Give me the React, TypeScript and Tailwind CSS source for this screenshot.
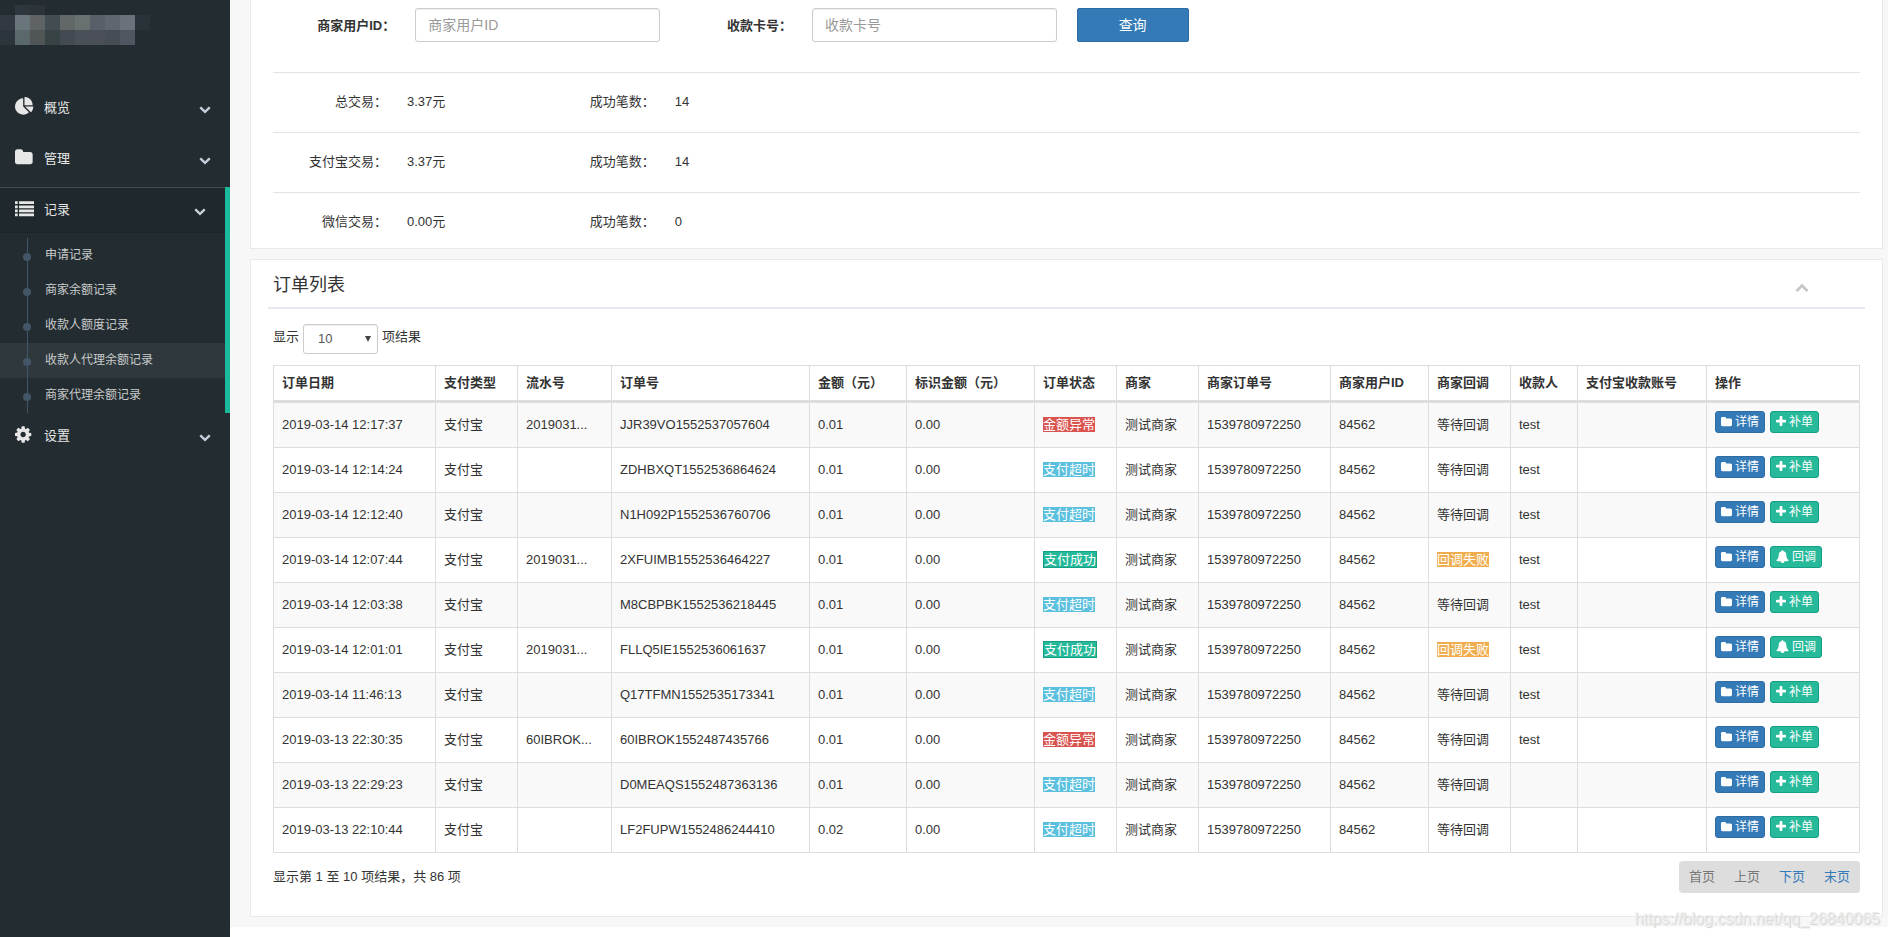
import React from 'react';

type IconProps = { className?: string };

const icons = {
  pie: 'M768 890l546 546q-106 108-247.500 168t-298.500 60q-209 0-385.500-103t-279.500-279.500-103-385.500 103-385.500 279.500-279.500 385.500-103v762zm187 6h773q0 157-60 298.500t-168 247.500zm709-128h-768v-768q209 0 385.500 103t279.500 279.500 103 385.500z',
  folder:
    'M1664 608v704q0 92-66 158t-158 66h-1216q-92 0-158-66t-66-158v-960q0-92 66-158t158-66h320q92 0 158 66t66 158v32h672q92 0 158 66t66 158z',
  list: 'M0 128h256v256h-256zM384 128h1408v256h-1408zM0 512h256v256h-256zM384 512h1408v256h-1408zM0 896h256v256h-256zM384 896h1408v256h-1408zM0 1280h256v256h-256zM384 1280h1408v256h-1408z',
  cog: 'M1024 896q0-106-75-181t-181-75-181 75-75 181 75 181 181 75 181-75 75-181zm512-109v222q0 12-8 23t-20 13l-185 28q-19 54-39 91 35 50 107 138 10 12 10 25t-9 23q-27 37-99 108t-94 71q-12 0-26-9l-138-108q-44 23-91 38-16 136-29 186-7 28-36 28h-222q-14 0-24.500-8.500t-11.500-21.500l-28-184q-49-16-90-37l-141 107q-10 9-25 9-14 0-25-11-126-114-165-168-7-10-7-23 0-12 8-23 15-21 51-66.500t54-70.500q-27-50-41-99l-183-27q-13-2-21-12.500t-8-23.500v-222q0-12 8-23t19-13l186-28q14-46 39-92-40-57-107-138-10-12-10-24 0-10 9-23 26-36 98.500-107.500t94.500-71.500q13 0 26 10l138 107q44-23 91-38 16-136 29-186 7-28 36-28h222q14 0 24.500 8.500t11.500 21.500l28 184q49 16 90 37l142-107q9-9 24-9 13 0 25 10 129 119 165 170 7 8 7 22 0 12-8 23-15 21-51 66.500t-54 70.500q26 50 41 98l183 28q13 2 21 12.500t8 23.500z',
  down: 'M1683 808l-742 741q-19 19-45 19t-45-19l-742-741q-19-19-19-45.500t19-45.500l166-165q19-19 45-19t45 19l531 531 531-531q19-19 45-19t45 19l166 165q19 19 19 45.500t-19 45.500z',
  up: 'M1683 1331l-166 165q-19 19-45 19t-45-19l-531-531-531 531q-19 19-45 19t-45-19l-166-165q-19-19-19-45.500t19-45.500l742-741q19-19 45-19t45 19l742 741q19 19 19 45.500t-19 45.500z',
  plus: 'M1408 736v192q0 40-28 68t-68 28h-416v416q0 40-28 68t-68 28h-192q-40 0-68-28t-28-68v-416h-416q-40 0-68-28t-28-68v-192q0-40 28-68t68-28h416v-416q0-40 28-68t68-28h192q40 0 68 28t28 68v416h416q40 0 68 28t28 68z',
  bell: 'M912 1696q0-16-16-16-59 0-101.500-42.500t-42.500-101.500q0-16-16-16t-16 16q0 73 51.500 124.500t124.500 51.500q16 0 16-16zm816-288q0 52-38 90t-90 38h-448q0 106-75 181t-181 75-181-75-75-181h-448q-52 0-90-38t-38-90q50-42 91-88t85-119.500 74.500-158.500 50-206 19.500-260q0-152 117-282.500t307-158.500q-8-19-8-39 0-40 28-68t68-28 68 28 28 68q0 20-8 39 190 28 307 158.500t117 282.500q0 139 19.500 260t50 206 74.500 158.500 85 119.500 91 88z',
};

function Icon({ name, className, box = '0 0 1792 1792' }: IconProps & { name: keyof typeof icons; box?: string }) {
  return (
    <svg viewBox={box} fill="currentColor" aria-hidden="true" className={className}>
      <path d={icons[name]} />
    </svg>
  );
}

const logoCells: [number, number, number, string][] = [
  [15, 5, 10, '#2f373e'], [30, 5, 10, '#2c343a'],
  [0, 15, 15, '#323940'], [15, 15, 15, '#69757a'], [30, 15, 15, '#5f6365'], [45, 15, 15, '#424d51'],
  [60, 15, 15, '#616867'], [75, 15, 15, '#697070'], [90, 15, 15, '#585f68'], [105, 15, 15, '#5f666f'],
  [120, 15, 15, '#6a717a'], [135, 15, 15, '#293139'],
  [0, 30, 15, '#2d353c'], [15, 30, 15, '#5a676b'], [30, 30, 15, '#505656'], [45, 30, 15, '#384346'],
  [60, 30, 15, '#434a51'], [75, 30, 15, '#4a5058'], [90, 30, 15, '#4a4f58'], [105, 30, 15, '#474d55'],
  [120, 30, 15, '#50565f'],
];

function MenuHeader({ icon, label, active }: { icon: keyof typeof icons; label: string; active?: boolean }) {
  return (
    <a
      href="#"
      className={
        active
          ? 'flex h-[46px] items-center border-t border-b border-t-[#3f4b4d] border-b-[#1b2427] bg-[#1f282c] pr-[19px] pl-[15px]'
          : 'flex h-[45px] items-center pr-[19px] pl-[15px]'
      }
    >
      <Icon name={icon} className="mb-0.5 h-[19px] w-[19px]" />
      <span className="ml-[10px] flex-1 text-[13px] leading-5">{label}</span>
      <Icon name="down" className="mt-0.5 h-3 w-3 text-[#c4cfda]" />
    </a>
  );
}

const records = ['申请记录', '商家余额记录', '收款人额度记录', '收款人代理余额记录', '商家代理余额记录'];

function Sidebar() {
  return (
    <aside className="w-[230px] shrink-0 bg-[#232d31] text-[#e7e7e7]">
      <svg width="150" height="45" className="block" aria-hidden="true" shapeRendering="crispEdges">
        {logoCells.map(([x, y, h, fill]) => (
          <rect key={`${x}-${y}`} x={x} y={y} width="15" height={h} fill={fill} />
        ))}
      </svg>
      <nav className="pt-10">
        <ul>
          <li className="mb-1.5">
            <MenuHeader icon="pie" label="概览" />
          </li>
          <li className="mb-1.5">
            <MenuHeader icon="folder" label="管理" />
          </li>
          <li className="border-r-[5px] border-[#1abb9c]">
            <MenuHeader icon="list" label="记录" active />
            <ul className="mt-[5px]">
              {records.map((r, i) => (
                <li key={r} className={i === 3 ? 'bg-white/6' : ''}>
                  <a href="#" className="flex h-[35px] items-center pl-[23px] text-xs text-[#c9cbcc]">
                    <span className="flex h-full w-2 flex-col items-center">
                      <span className="h-[15px] w-px bg-[#425668]" />
                      <span className="h-2 w-2 rounded-full bg-[#425668]" />
                      <span className="w-px flex-1 bg-[#425668]" />
                    </span>
                    <span className="ml-[14px] pb-0.5">{r}</span>
                  </a>
                </li>
              ))}
            </ul>
          </li>
          <li>
            <MenuHeader icon="cog" label="设置" />
          </li>
        </ul>
      </nav>
    </aside>
  );
}

const inputClass =
  'h-[34px] w-full rounded-[3px] border border-[#ccc] bg-white px-3 text-sm text-[#555] shadow-[inset_0_1px_1px_rgba(0,0,0,0.075)] outline-none placeholder:text-[#999]';

const stats = [
  ['总交易：', '3.37元', '14'],
  ['支付宝交易：', '3.37元', '14'],
  ['微信交易：', '0.00元', '0'],
];

function SummaryPanel() {
  return (
    <section className="border border-t-0 border-[#e6e9ed] bg-white px-[22px] pt-2">
      <form className="grid grid-cols-12 items-center pb-[30px]" onSubmit={(e) => e.preventDefault()}>
        <label htmlFor="merchant" className="pr-[10px] text-right font-bold whitespace-nowrap">
          商家用户ID：
        </label>
        <div className="col-span-2 px-[10px]">
          <input id="merchant" placeholder="商家用户ID" className={inputClass} />
        </div>
        <label htmlFor="card" className="pr-[10px] text-right font-bold whitespace-nowrap">
          收款卡号：
        </label>
        <div className="col-span-2 px-[10px]">
          <input id="card" placeholder="收款卡号" className={inputClass} />
        </div>
        <div className="px-[10px]">
          <button className="h-[34px] w-full rounded-[2px] border border-[#2e6da4] bg-[#337ab7] text-sm text-white">
            查询
          </button>
        </div>
      </form>
      {stats.map(([label, amount, count], i) => (
        <div key={label} className={i === 2 ? 'border-t border-[#e3e3e3] pb-[5px]' : 'border-t border-[#e3e3e3] pb-[9px]'}>
          <dl className="-mx-[10px] grid h-[50px] grid-cols-12 items-end pb-[11px] leading-5 whitespace-nowrap">
            <dt className="pr-[10px] text-right">{label}</dt>
            <dd className="pl-[10px]">{amount}</dd>
            <dt className="pr-[10px] text-right">成功笔数：</dt>
            <dd className="pl-[10px]">{count}</dd>
          </dl>
        </div>
      ))}
    </section>
  );
}

const columns: [string, string][] = [
  ['订单日期', 'w-[162px]'],
  ['支付类型', 'w-[82px]'],
  ['流水号', 'w-[94px]'],
  ['订单号', 'w-[198px]'],
  ['金额（元）', 'w-[97px]'],
  ['标识金额（元）', 'w-[128px]'],
  ['订单状态', 'w-[82px]'],
  ['商家', 'w-[82px]'],
  ['商家订单号', 'w-[132px]'],
  ['商家用户ID', 'w-[98px]'],
  ['商家回调', 'w-[82px]'],
  ['收款人', 'w-[67px]'],
  ['支付宝收款账号', 'w-[129px]'],
  ['操作', 'w-[153px]'],
];

type Status = '金额异常' | '支付超时' | '支付成功';

const statusClass: Record<Status, string> = {
  金额异常: 'bg-[#d9534f] text-white',
  支付超时: 'bg-[#5bc0de] text-white',
  支付成功: 'border border-[#169f85] bg-[#26b99a] text-white',
};

type Order = { date: string; serial: string; no: string; amount: string; status: Status; payee: string };

const orders: Order[] = [
  { date: '2019-03-14 12:17:37', serial: '2019031...', no: 'JJR39VO1552537057604', amount: '0.01', status: '金额异常', payee: 'test' },
  { date: '2019-03-14 12:14:24', serial: '', no: 'ZDHBXQT1552536864624', amount: '0.01', status: '支付超时', payee: 'test' },
  { date: '2019-03-14 12:12:40', serial: '', no: 'N1H092P1552536760706', amount: '0.01', status: '支付超时', payee: 'test' },
  { date: '2019-03-14 12:07:44', serial: '2019031...', no: '2XFUIMB1552536464227', amount: '0.01', status: '支付成功', payee: 'test' },
  { date: '2019-03-14 12:03:38', serial: '', no: 'M8CBPBK1552536218445', amount: '0.01', status: '支付超时', payee: 'test' },
  { date: '2019-03-14 12:01:01', serial: '2019031...', no: 'FLLQ5IE1552536061637', amount: '0.01', status: '支付成功', payee: 'test' },
  { date: '2019-03-14 11:46:13', serial: '', no: 'Q17TFMN1552535173341', amount: '0.01', status: '支付超时', payee: 'test' },
  { date: '2019-03-13 22:30:35', serial: '60IBROK...', no: '60IBROK1552487435766', amount: '0.01', status: '金额异常', payee: 'test' },
  { date: '2019-03-13 22:29:23', serial: '', no: 'D0MEAQS1552487363136', amount: '0.01', status: '支付超时', payee: '' },
  { date: '2019-03-13 22:10:44', serial: '', no: 'LF2FUPW1552486244410', amount: '0.02', status: '支付超时', payee: '' },
];

function Td({ children }: { children?: React.ReactNode }) {
  return <td className="h-[45px] overflow-hidden border-r border-b border-[#ddd] px-2 pb-0.5 align-middle">{children}</td>;
}

const smallButton = 'flex h-[22px] items-center rounded-[3px] border px-[5px] text-xs text-white';

function OrderRow({ order }: { order: Order }) {
  const done = order.status === '支付成功';
  return (
    <tr className="odd:bg-[#f9f9f9]">
      <Td>{order.date}</Td>
      <Td>支付宝</Td>
      <Td>{order.serial}</Td>
      <Td>{order.no}</Td>
      <Td>{order.amount}</Td>
      <Td>0.00</Td>
      <Td>
        <span className={statusClass[order.status]}>{order.status}</span>
      </Td>
      <Td>测试商家</Td>
      <Td>1539780972250</Td>
      <Td>84562</Td>
      <Td>{done ? <span className="bg-[#f0ad4e] text-white">回调失败</span> : '等待回调'}</Td>
      <Td>{order.payee}</Td>
      <Td />
      <Td>
        <div className="flex gap-[5px] pb-[5px]">
          <button className={`${smallButton} gap-[3px] border-[#2e6da4] bg-[#337ab7]`}>
            <Icon name="folder" box="0 0 1664 1792" className="h-3 w-[11px]" />
            详情
          </button>
          <button className={`${smallButton} gap-[3px] border-[#169f85] bg-[#26b99a]`}>
            {done ? (
              <Icon name="bell" className="h-[13px] w-[13px]" />
            ) : (
              <Icon name="plus" box="0 0 1408 1792" className="h-[13px] w-[10px]" />
            )}
            {done ? '回调' : '补单'}
          </button>
        </div>
      </Td>
    </tr>
  );
}

function OrdersPanel() {
  return (
    <section className="mt-[10px] border border-[#e6e9ed] bg-white px-[17px] pb-[23px]">
      <header className="flex h-[49px] items-center justify-between border-b-2 border-[#e6e9ed] pt-0.5 pr-[56px] pl-[5px]">
        <h2 className="text-lg leading-6">订单列表</h2>
        <button aria-label="收起" className="mt-1 text-[#c5c7cb]">
          <Icon name="up" className="block h-[14px] w-[14px]" />
        </button>
      </header>
      <div className="px-[5px] pt-[15px]">
        <label className="flex items-center gap-1 leading-[26px]">
          <span className="pb-1">显示</span>
          <span className="relative block">
            <select
              defaultValue="10"
              className="block h-[30px] w-[75px] appearance-none rounded-[3px] border border-[#ccc] bg-white pl-[14px] text-[13px] text-[#555] shadow-[inset_0_1px_1px_rgba(0,0,0,0.075)]"
            >
              <option>10</option>
              <option>25</option>
              <option>50</option>
            </select>
            <svg viewBox="0 0 6 6" className="pointer-events-none absolute top-3 right-[7px] h-1.5 w-1.5" aria-hidden="true">
              <path d="M0 0h6L3 6z" fill="#444" />
            </svg>
          </span>
          <span className="pb-1">项结果</span>
        </label>
        <table className="mt-[11px] w-full table-fixed border-separate border-spacing-0 border-t border-l border-[#ddd] whitespace-nowrap">
          <colgroup>
            {columns.map(([name, width]) => (
              <col key={name} className={width} />
            ))}
          </colgroup>
          <thead>
            <tr>
              {columns.map(([name]) => (
                <th key={name} className="h-[37px] border-r border-b-[3px] border-[#ddd] px-2 pb-0.5 text-left font-bold">
                  {name}
                </th>
              ))}
            </tr>
          </thead>
          <tbody>
            {orders.map((o) => (
              <OrderRow key={o.no} order={o} />
            ))}
          </tbody>
        </table>
        <footer className="mt-2 flex items-center justify-between">
          <p className="pb-0.5">显示第 1 至 10 项结果，共 86 项</p>
          <nav className="flex h-8 items-center gap-[19px] rounded bg-[#ddd] px-[10px] pb-0.5 text-[#337ab7]">
            <a href="#" className="text-[#777]">首页</a>
            <a href="#" className="text-[#777]">上页</a>
            <a href="#">下页</a>
            <a href="#">末页</a>
          </nav>
        </footer>
      </div>
    </section>
  );
}

export default function App() {
  return (
    <div className="relative flex min-h-screen bg-white font-['Liberation_Sans','Noto_Sans_CJK_SC',sans-serif] text-[13px] leading-[19px] text-[#333]">
      <Sidebar />
      <main className="min-w-0 flex-1 self-start bg-[#f7f7f7] pr-[5px] pb-[10px] pl-5">
        <SummaryPanel />
        <OrdersPanel />
      </main>
      <p className="absolute right-2 bottom-2 text-base leading-5 text-[#ededed] [text-shadow:1px_1px_1px_#d0d0d0]">
        https://blog.csdn.net/qq_26840065
      </p>
    </div>
  );
}
